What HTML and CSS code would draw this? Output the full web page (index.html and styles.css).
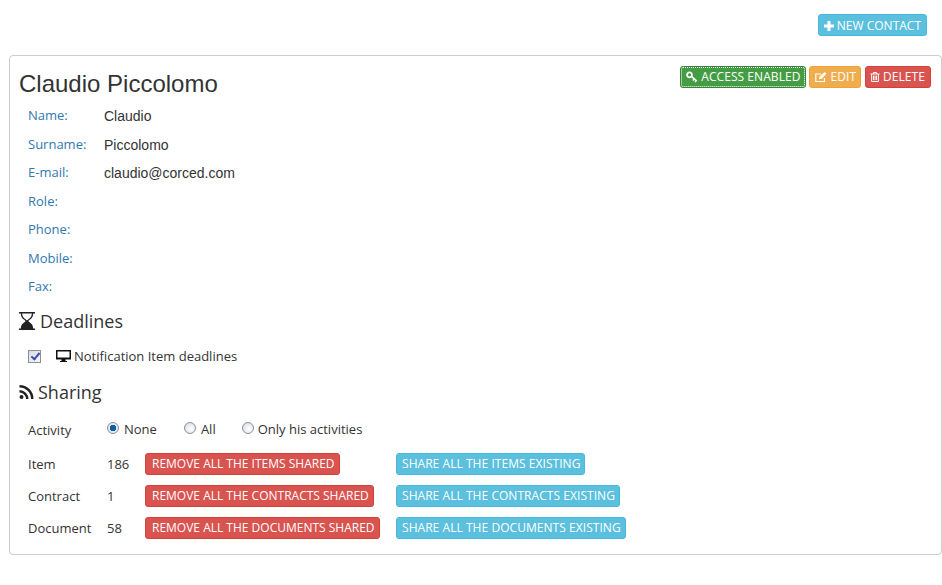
FILE: index.html
```html
<!DOCTYPE html>
<html lang="en">
<head>
<meta charset="utf-8">
<title>Contact</title>
<link rel="stylesheet" href="styles.css">
</head>
<body>
<div class="top"><a class="btn info icon-btn"><svg class="ic" viewBox="0 0 10 10"><path d="M3.500 0h3v3.500H10v3H6.500V10h-3V6.500H0v-3h3.500z" fill="#fff"/></svg>NEW CONTACT</a></div>
<section class="panel">
  <header class="head">
    <h1>Claudio Piccolomo</h1>
    <div class="actions">
      <a class="btn success focus icon-btn"><svg class="ic wide key" viewBox="0 0 12 12"><circle cx="3.500" cy="3.800" r="2.500" fill="none" stroke="#fff" stroke-width="1.700"/><path d="M5.400 5.400l5.400 4.600M8.300 7.800L7 9.400M10.300 9.500L9 11" stroke="#fff" stroke-width="1.600" fill="none"/></svg>ACCESS ENABLED</a>
      <a class="btn warning icon-btn edit"><svg class="ic wide" viewBox="0 0 12 12"><path d="M9.500 7v3.500H.8V3H6" fill="none" stroke="#fff" stroke-width="1.200"/><path d="M4 8.300l.5-2.800L9.700 1 11.500 2.800 6.800 7.700z" fill="#fff"/></svg>EDIT</a>
      <a class="btn danger icon-btn del"><svg class="ic" viewBox="0 0 10 11"><path d="M0 2.200h10M3.300 2.200V.6h3.400v1.600M1.300 2.200v8.300h7.400V2.200M3.300 4v5M5 4v5M6.700 4v5" fill="none" stroke="#fff" stroke-width="1.100"/></svg>DELETE</a>
    </div>
  </header>
  <dl class="fields">
    <dt>Name:</dt><dd>Claudio</dd>
    <dt>Surname:</dt><dd>Piccolomo</dd>
    <dt>E-mail:</dt><dd>claudio@corced.com</dd>
    <dt>Role:</dt><dd></dd>
    <dt>Phone:</dt><dd></dd>
    <dt>Mobile:</dt><dd></dd>
    <dt>Fax:</dt><dd></dd>
  </dl>
  <h2><svg class="h-ic hour" viewBox="0 0 16 18"><path d="M0 0h16v1.400h-1.800C14.200 6 10.800 7.300 9.300 9c1.500 1.700 4.900 3 4.900 7.600H16V18H0v-1.400h1.800C1.800 12 5.200 10.700 6.700 9 5.200 7.300 1.800 6 1.800 1.400H0zM3.200 1.400C3.200 5.500 6.500 7 8 8.300 9.500 7 12.800 5.500 12.800 1.400z" fill="#222"/><path d="M2 16.800C2.500 13.500 6.200 12.500 8 10.500c1.800 2 5.500 3 6 6.300z" fill="#222"/></svg>Deadlines</h2>
  <div class="notify">
    <input type="checkbox" checked>
    <svg class="mon" viewBox="0 0 15 12"><path d="M0 0h15v9.500H9.500V11H11v1H4v-1h1.500V9.500H0zM1.500 1.500v6h12v-6z" fill="#111"/></svg>
    <span>Notification Item deadlines</span>
  </div>
  <h2 class="sharing"><svg class="h-ic rss" viewBox="0 0 14 14"><circle cx="2" cy="12" r="2" fill="#222"/><path d="M0 5v2.500A6.500 6.500 0 0 1 6.500 14H9A9 9 0 0 0 0 5zM0 0v2.500A11.500 11.500 0 0 1 11.500 14H14A14 14 0 0 0 0 0z" fill="#222"/></svg>Sharing</h2>
  <div class="activity">
    <span class="name">Activity</span>
    <div class="radios">
      <label class="r1"><input type="radio" name="a" checked>None</label>
      <label class="r2"><input type="radio" name="a">All</label>
      <label class="r3"><input type="radio" name="a">Only his activities</label>
    </div>
  </div>
  <div class="share">
    <span class="name">Item</span><span class="num">186</span>
    <div class="col"><a class="btn danger">REMOVE ALL THE ITEMS SHARED</a></div>
    <a class="btn info">SHARE ALL THE ITEMS EXISTING</a>
  </div>
  <div class="share">
    <span class="name">Contract</span><span class="num">1</span>
    <div class="col"><a class="btn danger">REMOVE ALL THE CONTRACTS SHARED</a></div>
    <a class="btn info">SHARE ALL THE CONTRACTS EXISTING</a>
  </div>
  <div class="share">
    <span class="name">Document</span><span class="num">58</span>
    <div class="col"><a class="btn danger">REMOVE ALL THE DOCUMENTS SHARED</a></div>
    <a class="btn info">SHARE ALL THE DOCUMENTS EXISTING</a>
  </div>
</section>
</body>
</html>
```
FILE: styles.css
```css
* { box-sizing: border-box; }
html, body { margin: 0; padding: 0; background: #fff; }
body { width: 942px; font-family: "Open Sans", sans-serif; font-size: 13px; color: #333; overflow: hidden; }
.top { display: flex; justify-content: flex-end; padding: 14px 15px 19px 0; height: 55px; }
.btn { display: inline-flex; align-items: center; height: 22px; padding: 0 4px 0 5px; border: 1px solid; border-radius: 3px; font-size: 12px; line-height: 18px; color: #fff; white-space: nowrap; }
.top .btn { padding: 1px 5px 0 5px; }
.share .info { letter-spacing: .05px; }
.danger:not(.icon-btn) { padding-left: 6px; }
.info { background: #5bc0de; border-color: #46b8da; }
.success { background: #449d44; border-color: #398439; }
.warning { background: #f0ad4e; border-color: #eea236; }
.danger { background: #d9534f; border-color: #d43f3a; }
.focus { outline: 1px dotted #fff; outline-offset: -2px; }
.ic { width: 10px; height: 10px; margin-right: 3px; flex: none; }
.ic.wide { width: 12px; height: 12px; }
.panel { margin-left: 9px; width: 933px; height: 500px; border: 1px solid #ccc; border-radius: 4px; padding: 0 10px 0 9px; }
.head { display: flex; justify-content: space-between; height: 46px; }
h1 { margin: 13px 0 0; font-family: "Liberation Sans", sans-serif; font-weight: 400; font-size: 24px; line-height: 30px; color: #333; }
.actions { display: flex; gap: 3px; padding-top: 10px; align-items: flex-start; }
.actions .btn { letter-spacing: .06px; padding-right: 5px; }
.actions .edit { padding-right: 4px; }
.actions .del { margin-left: 1px; padding: 0 5px 0 4px; }
.fields { display: grid; grid-template-columns: 76px 1fr; grid-auto-rows: 28.5px; margin: 0; padding-left: 9px; height: 206px; }
dt { font-size: 13px; line-height: 26px; color: #2f78b0; }
dd { margin: 0; font-family: "Liberation Sans", sans-serif; font-size: 14px; line-height: 29px; color: #333; }
h2 { display: flex; align-items: center; margin: 0; height: 26px; font-weight: 400; font-size: 18px; line-height: 26px; color: #333; }
.h-ic { flex: none; }
.hour { width: 16px; height: 18px; margin-right: 5px; }
.rss { width: 15px; height: 14px; margin-right: 4px; }
.notify { display: flex; align-items: center; height: 20px; margin: 12px 0 0 9px; color: #333; }
.notify input { appearance: none; position: relative; width: 13px; height: 13px; margin: 0 15px 0 0; border: 1px solid #8a8f9c; background: linear-gradient(135deg, #d8dbe6, #f6f7fb); }
.notify input::after { content: ""; position: absolute; left: 3.500px; top: 0.500px; width: 3px; height: 7px; border: solid #3c4fa8; border-width: 0 2px 2px 0; transform: rotate(40deg); }
.mon { width: 15px; height: 12px; margin-right: 3px; }
.sharing { margin-top: 13px; }
.activity { display: flex; align-items: center; height: 24px; margin: 13px 0 0 9px; }
.name { width: 79px; flex: none; }
.radios { display: flex; margin-top: -2px; }
.radios label { display: flex; align-items: center; }
.radios .r1 { margin-right: 27px; }
.radios .r2 { margin-right: 26px; }
.radios input { appearance: none; width: 12px; height: 12px; margin: 0 5px 2px 0; border: 1px solid #8a8f9c; border-radius: 50%; background: radial-gradient(circle at 60% 60%, #fff, #d5d8e0); }
.radios .r3 input { margin-right: 4px; }
.radios input:checked { background: radial-gradient(circle, #0d5f9e 0 3px, #e6e8ef 3.500px); }
.share { display: flex; align-items: center; height: 22px; margin: 10px 0 0 9px; }
.activity + .share { margin-top: 11px; }
.num { width: 38px; flex: none; }
.col { width: 251px; flex: none; }
```
